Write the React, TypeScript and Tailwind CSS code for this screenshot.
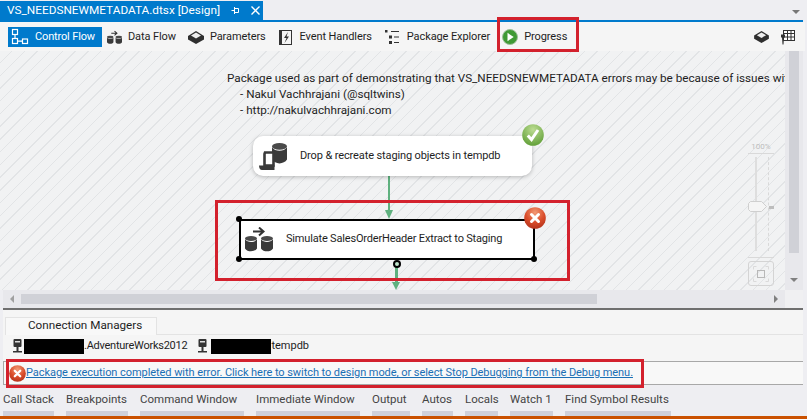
import React from "react";

function Db({ x, y, w = 12, h = 15 }: { x: number; y: number; w?: number; h?: number }) {
  const ry = h * 0.17;
  return (
    <g>
      <path
        d={`M${x} ${y + ry + 0.8}c${w * 0.2} ${ry * 1.4} ${w * 0.8} ${ry * 1.4} ${w} 0V${y + h - ry}c${-w * 0.2} ${ry * 1.5} ${-w * 0.8} ${ry * 1.5} ${-w} 0z`}
        fill="#3a3a3a"
      />
      <ellipse cx={x + w / 2} cy={y + ry} rx={w / 2} ry={ry} fill="#4a4a4a" />
    </g>
  );
}

function TwoDb({ w, h }: { w: number; h: number }) {
  return (
    <svg width={w} height={h} viewBox="0 0 28 25" className="shrink-0">
      <path d="M8 4.500h10M14 .5l4.500 4-4.500 4" fill="none" stroke="#333" strokeWidth="2" />
      <Db x={0} y={9} />
      <Db x={16} y={9} />
    </svg>
  );
}

function ControlFlowIcon() {
  return (
    <svg width="18" height="18" viewBox="0 0 18 18" fill="none" stroke="#fff" strokeWidth="1.2" className="shrink-0">
      <rect x="1.500" y="1.500" width="5" height="5" />
      <rect x="1.500" y="10.500" width="5" height="5" />
      <rect x="11.500" y="11" width="5" height="4.500" />
      <path d="M4 6.500v4M6.500 13.200h5" />
    </svg>
  );
}
function PackIcon({ w = 16, h = 13 }: { w?: number; h?: number }) {
  return (
    <svg width={w} height={h} viewBox="0 0 16 13" className="shrink-0">
      <path d="M8 0l8 5v3.500L8 13 0 8.500V5z" fill="#2f2f2f" />
      <path d="M8 1.500l5 3-5 3-5-3z" fill="#eee" />
    </svg>
  );
}
function EventIcon() {
  return (
    <svg width="13" height="15" viewBox="0 0 13 15" className="shrink-0">
      <rect x=".5" y=".5" width="12" height="14" fill="#f5f5f5" stroke="#333" />
      <rect x="1" y="1" width="2" height="13" fill="#333" />
      <path d="M9 2L5 8h2.500L5.500 13 10 6.500H7.500z" fill="#333" />
    </svg>
  );
}
function ExplorerIcon() {
  return (
    <svg width="15" height="15" viewBox="0 0 15 15" fill="#333" className="shrink-0">
      <rect x="0" y="0" width="2.500" height="2.500" />
      <rect x="4" y="5.500" width="3" height="3" />
      <rect x="4" y="11" width="3" height="3" />
      <rect x="6" y="1" width="8" height="1" />
      <rect x="9" y="6.500" width="5" height="1" />
      <rect x="9" y="12" width="5" height="1" />
    </svg>
  );
}
function ProgressIcon() {
  return (
    <svg width="16" height="16" viewBox="0 0 16 16" className="shrink-0">
      <circle cx="8" cy="8" r="7.500" fill="#3f9a35" stroke="#9dbf9a" />
      <path d="M5.500 3.800l6.200 4.200-6.200 4.200z" fill="#fff" />
    </svg>
  );
}
function VarIcon() {
  return (
    <svg width="14" height="15" viewBox="0 0 14 15" className="shrink-0">
      <rect x="2.500" y=".5" width="11" height="10" fill="#fff" stroke="#333" />
      <path d="M2.500 3.500h11M6.500 1v10M10 1v10M2.500 7h11" stroke="#333" />
      <path d="M0 4.500h4v3H3l-.5 7h-1L1 7.500H0z" fill="#333" />
    </svg>
  );
}
function PlugIcon() {
  return (
    <svg width="9" height="15" viewBox="0 0 9 15" fill="#333" className="shrink-0">
      <rect x="0.500" y="0" width="8" height="8" rx="1" />
      <rect x="2" y="2" width="5" height="1.500" fill="#ddd" />
      <rect x="3.500" y="8" width="2" height="4" />
      <rect x="0" y="12" width="9" height="1.500" />
    </svg>
  );
}
function ErrorBadge({ size }: { size: number }) {
  return (
    <svg width={size} height={size} viewBox="0 0 22 22" className="shrink-0">
      <defs>
        <radialGradient id={`eg${size}`} cx="50%" cy="25%" r="80%">
          <stop offset="0%" stopColor="#f29a75" />
          <stop offset="55%" stopColor="#da4d2b" />
          <stop offset="100%" stopColor="#b0301a" />
        </radialGradient>
      </defs>
      <circle cx="11" cy="11" r="10.800" fill={`url(#eg${size})`} />
      <path d="M7.500 7.500l7 7M14.500 7.500l-7 7" stroke="#fff" strokeWidth="3" strokeLinecap="round" />
    </svg>
  );
}
function CheckBadge() {
  return (
    <svg width="22" height="22" viewBox="0 0 22 22">
      <defs>
        <radialGradient id="cg" cx="50%" cy="25%" r="80%">
          <stop offset="0%" stopColor="#bcdc92" />
          <stop offset="100%" stopColor="#5c9c33" />
        </radialGradient>
      </defs>
      <circle cx="11" cy="11" r="10.800" fill="url(#cg)" />
      <path d="M5.800 11.500l3.700 4 6.500-9.500" fill="none" stroke="#fff" strokeWidth="3" />
    </svg>
  );
}
function SqlIcon() {
  return (
    <svg width="28" height="27" viewBox="0 0 28 27" className="ml-[6px] shrink-0">
      <Db x={13} y={0} w={15} h={20} />
      <path d="M6 9.500h8.500v13H5.500V11z" fill="#fff" stroke="#3a3a3a" strokeWidth="2.600" />
      <path d="M0 22.500h15.500V27H3c-2 0-3-2-3-4.500z" fill="#3a3a3a" />
    </svg>
  );
}
function FitIcon() {
  return (
    <svg width="18" height="18" viewBox="0 0 18 18" fill="none">
      <rect x="5.500" y="5.500" width="7" height="7" stroke="#b8b8b8" />
      <path d="M1.500 4.500v-3h3M13.500 1.500h3v3M16.500 13.500v3h-3M4.500 16.500h-3v-3" stroke="#dadada" />
    </svg>
  );
}

function ToolItem({ icon, label, gap, ml }: { icon: React.ReactNode; label: string; gap: string; ml: string }) {
  return (
    <div className={`flex items-center ${gap} ${ml} text-[11px] tracking-[-0.1px] text-[#1e1e1e] whitespace-nowrap`}>
      {icon}
      <span>{label}</span>
    </div>
  );
}

const bottomTabs = [
  ["Call Stack", "w-[51px]"],
  ["Breakpoints", "w-[62px]"],
  ["Command Window", "w-[104px]"],
  ["Immediate Window", "w-[104px]"],
  ["Output", "w-[38px]"],
  ["Autos", "w-[31px]"],
  ["Locals", "w-[33px]"],
  ["Watch 1", "w-[43px]"],
  ["Find Symbol Results", "w-[106px]"],
];

export default function App() {
  return (
    <div className="relative w-[807px] h-[419px] overflow-hidden bg-[#eeeef2] flex flex-col" style={{ fontFamily: "Roboto, sans-serif" }}>
      {/* tab strip */}
      <div className="h-[20px] pt-px flex justify-between shrink-0 pr-[7px]">
        <div className="w-[263px] bg-[#007acc] text-white text-[11.8px] pl-[7px] flex items-center whitespace-nowrap">
          <span>VS_NEEDSNEWMETADATA.dtsx [Design]</span>
          <svg className="ml-[11px]" width="9" height="9" viewBox="0 0 9 9" fill="none" stroke="#fff">
            <path d="M.5 4.500h3M3.500 2.500h4v4h-4zM3.500 1v7" />
          </svg>
          <svg className="ml-[11px]" width="9" height="9" viewBox="0 0 9 9" fill="none" stroke="#fff" strokeWidth="1.400">
            <path d="M.5.5l8 8M8.500.5l-8 8" />
          </svg>
        </div>
        <div className="mt-[9px] w-0 h-0 border-x-[4px] border-x-transparent border-t-[4px] border-t-[#777]" />
      </div>
      <div className="h-[2px] bg-[#007acc] shrink-0 mr-[4px]" />

      {/* toolbar */}
      <div className="h-[29px] bg-[#f5f5f5] shrink-0 flex items-center justify-between pr-[10px] pl-[8px] mr-[2px] pt-px">
        <div className="flex items-center">
          <div className="h-[20px] w-[94px] bg-[#007acc] flex items-center gap-[6px] text-white text-[11px] tracking-[-0.15px] pl-[3px] whitespace-nowrap">
            <ControlFlowIcon />
            <span>Control Flow</span>
          </div>
          <ToolItem ml="ml-[5px]" gap="gap-[6px]" icon={<TwoDb w={15} h={15} />} label="Data Flow" />
          <ToolItem ml="ml-[12px]" gap="gap-[6px]" icon={<PackIcon />} label="Parameters" />
          <ToolItem ml="ml-[13px]" gap="gap-[8px]" icon={<EventIcon />} label="Event Handlers" />
          <ToolItem ml="ml-[13px]" gap="gap-[7px]" icon={<ExplorerIcon />} label="Package Explorer" />
          <ToolItem ml="ml-[12px]" gap="gap-[6px]" icon={<ProgressIcon />} label="Progress" />
        </div>
        <div className="flex items-center gap-[12px]">
          <PackIcon w={15} h={12} />
          <VarIcon />
        </div>
      </div>

      {/* designer */}
      <div className="flex-1 flex flex-col min-h-0 pr-[4px]">
        <div className="flex h-[239px] shrink-0">
          <div className="relative flex-1 bg-[#f1f2f3] bg-[repeating-linear-gradient(135deg,#f1f2f3_0,#f1f2f3_8px,#e2e4e6_8px,#e2e4e6_9px)] overflow-hidden">
            <div className="absolute left-[227px] top-[19px] whitespace-nowrap text-[11.7px] leading-[16px] text-[#1e1e1e]">
              <div>Package used as part of demonstrating that VS_NEEDSNEWMETADATA errors may be because of issues with</div>
              <div className="pl-[13px]">- Nakul Vachhrajani (@sqltwins)</div>
              <div className="pl-[13px]">- http://nakulvachhrajani.com</div>
            </div>

            {/* arrow 1 */}
            <div className="absolute left-[388px] top-[125px] w-[2px] h-[36px] bg-[#5fb17f]" />
            <div className="absolute left-[385px] top-[159px] w-0 h-0 border-x-[4px] border-x-transparent border-t-[9px] border-t-[#5fb17f]" />

            {/* node 1 */}
            <div className="absolute left-[253px] top-[85px] w-[279px] h-[40px] rounded-[10px] bg-white shadow-[0_1px_4px_rgba(0,0,0,0.25)] flex items-center text-[11px] tracking-[-0.12px] text-[#1e1e1e] whitespace-nowrap">
              <SqlIcon />
              <span className="ml-[13px]">Drop &amp; recreate staging objects in tempdb</span>
            </div>
            <div className="absolute left-[522px] top-[73px]"><CheckBadge /></div>

            {/* node 2 */}
            <div className="absolute left-[239px] top-[168px] w-[296px] h-[41px] bg-white border-[2px] border-black flex items-center text-[11px] tracking-[-0.18px] text-[#1e1e1e] whitespace-nowrap">
              <div className="ml-[4px]"><TwoDb w={28} h={25} /></div>
              <span className="ml-[13px]">Simulate SalesOrderHeader Extract to Staging</span>
            </div>
            {[
              "left-[236px] top-[165px]",
              "left-[531px] top-[165px]",
              "left-[236px] top-[205px]",
              "left-[531px] top-[205px]",
            ].map((c) => (
              <div key={c} className={`absolute ${c} w-[6px] h-[6px] rounded-full bg-black`} />
            ))}
            <div className="absolute left-[524px] top-[156px]"><ErrorBadge size={22} /></div>

            {/* arrow 2 */}
            <div className="absolute left-[395px] top-[216px] w-[3px] h-[16px] bg-[#5fb17f]" />
            <div className="absolute left-[392px] top-[231px] w-0 h-0 border-x-[4.500px] border-x-transparent border-t-[8px] border-t-[#5fb17f]" />
            <div className="absolute left-[393px] top-[209px] w-[8px] h-[8px] rounded-full bg-[#bfe3cb] border-[2px] border-black" />

            {/* zoom slider */}
            <div className="absolute left-[748px] top-[91px] w-[26px] text-center text-[8px] leading-[10px] text-[#bdbdbd]">100%</div>
            <div className="absolute left-[748px] top-[102px] w-[26px] h-[105px] border-y border-[#d9d9d9]">
              <div className="absolute left-[7px] top-[3px] bottom-[6px] w-[2px] bg-[#dedede]" />
              <div className="absolute left-[20px] top-[3px] bottom-[6px] border-l border-dashed border-[#d9d9d9]" />
              <svg className="absolute left-0 top-[47px]" width="19" height="11" viewBox="0 0 19 11">
                <path d="M2.500.5h11l5 5-5 5h-11l-2-2v-6z" fill="#f5f5f5" stroke="#cfcfcf" />
              </svg>
              <div className="absolute left-[21px] top-[52px] w-[5px] h-[3px] bg-[#bdbdbd]" />
            </div>
            <div className="absolute left-[748px] top-[210px] w-[26px] h-[25px] rounded-[3px] border border-[#d4d4d4] flex items-center justify-center">
              <FitIcon />
            </div>
          </div>
          {/* vertical scrollbar */}
          <div className="w-[18px] shrink-0 bg-[#e8e8ec] relative pl-[4px]">
            <div className="w-[10px] h-[202px] bg-[#d0d1d7]" />
            <div className="absolute bottom-[8px] left-[5px] w-0 h-0 border-x-[4px] border-x-transparent border-t-[4px] border-t-[#808080]" />
          </div>
        </div>

        {/* horizontal scrollbar */}
        <div className="h-[20px] shrink-0 flex items-stretch bg-[#e8e8ec] border-b-[2px] border-[#6f6f6f] ml-[3px]">
          <div className="flex flex-1 items-center pl-[7px] pr-[7px] pb-[1px]">
            <div className="w-0 h-0 border-y-[4px] border-y-transparent border-r-[4px] border-r-[#a0a0a0]" />
            <div className="ml-[7px] w-[576px] h-[10px] bg-[#d0d1d7]" />
            <div className="ml-auto w-0 h-0 border-y-[4px] border-y-transparent border-l-[4px] border-l-[#808080]" />
          </div>
          <div className="w-[18px] bg-[#f0f0f2]" />
        </div>

        {/* connection managers */}
        <div className="flex-1 bg-[#f5f5f5] flex flex-col ml-[3px]">
          <div className="pt-[7px] pl-[2px] shrink-0">
            <div className="h-[18px] border-b border-[#e3e3e3]">
              <div className="w-[152px] h-[18px] border border-b-0 border-[#e3e3e3] bg-[#f8f8f8] text-[11.7px] leading-[15px] text-[#1e1e1e] pl-[22px] whitespace-nowrap">
                Connection Managers
              </div>
            </div>
          </div>
          <div className="h-[23px] flex items-center pl-[10px] text-[11px] text-[#1e1e1e] shrink-0 whitespace-nowrap">
            <PlugIcon />
            <div className="ml-[2px] w-[60px] h-[15px] bg-black" />
            <span className="tracking-[-0.25px]">.AdventureWorks2012</span>
            <div className="ml-[11px]"><PlugIcon /></div>
            <div className="ml-[4px] w-[60px] h-[15px] bg-black" />
            <span>tempdb</span>
          </div>
        </div>
      </div>

      {/* error bar */}
      <div className="h-[24px] shrink-0 ml-[3px] mr-[4px] mb-[2px] border-y border-l border-[#a8a8a8] bg-[#f8f8f8] flex items-center pl-[5px] pt-px text-[11px] tracking-[-0.06px] text-[#1a6fb5] whitespace-nowrap">
        <ErrorBadge size={17} />
        <span className="underline">Package execution completed with error. Click here to switch to design mode, or select Stop Debugging from the Debug menu.</span>
      </div>

      {/* bottom tabs */}
      <div className="h-[29px] shrink-0 bg-[#eeeef2] flex gap-[12px] pl-[3px] text-[11.5px] text-[#444]">
        {bottomTabs.map(([label, w]) => (
          <div key={label} className={`${w} flex flex-col justify-between`}>
            <div className="leading-[24px] whitespace-nowrap">{label}</div>
            <div className="h-[6px] bg-[#cfd0da]" />
          </div>
        ))}
      </div>
      <div className="h-[3px] shrink-0 bg-[#ca5100]" />

      {/* red annotation boxes */}
      <div className="absolute left-[497px] top-[17px] w-[82px] h-[35px] border-[3px] border-[#d3212d]" />
      <div className="absolute left-[215px] top-[200px] w-[355px] h-[81px] border-[3px] border-[#d3212d]" />
      <div className="absolute left-[6px] top-[359px] w-[638px] h-[29px] border-[3px] border-[#d3212d]" />
    </div>
  );
}
